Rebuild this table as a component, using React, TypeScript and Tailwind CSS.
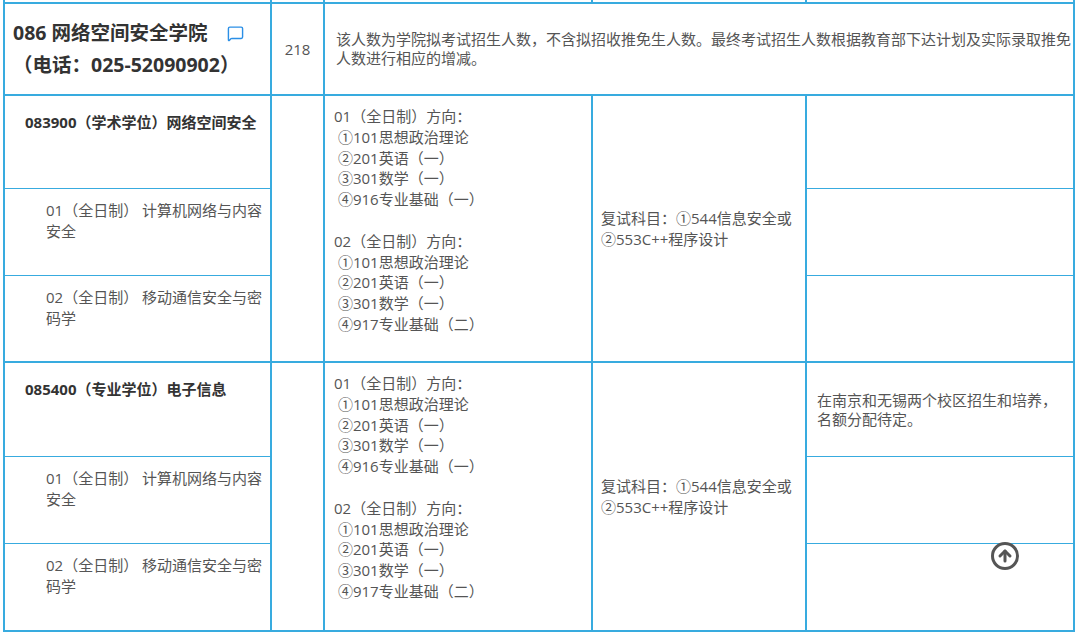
import React from 'react';
import { MessageSquare, CircleArrowUp } from 'lucide-react';

const font = { fontFamily: '"Open Sans", "Noto Sans CJK SC", sans-serif' };

const line = 'border-[#38abdf]';

const directions = [
  {
    label: '01（全日制）方向：',
    items: [' ①101思想政治理论', ' ②201英语（一）', ' ③301数学（一）', ' ④916专业基础（一）'],
  },
  {
    label: '02（全日制）方向：',
    items: [' ①101思想政治理论', ' ②201英语（一）', ' ③301数学（一）', ' ④917专业基础（二）'],
  },
];

const subs = [
  ['01（全日制） 计算机网络与内容', '安全'],
  ['02（全日制） 移动通信安全与密', '码学'],
];

function Exams() {
  return (
    <div className="pl-[9px] pt-[10px] text-[15px] leading-[20.8px] text-[#555] whitespace-pre">
      {directions.map((d, i) => (
        <div key={d.label} className={i > 0 ? 'mt-[20.8px]' : ''}>
          <div>{d.label}</div>
          {d.items.map((t) => (
            <div key={t}>{t}</div>
          ))}
        </div>
      ))}
    </div>
  );
}

function Retest() {
  return (
    <div className="h-full flex flex-col justify-center pl-[8px] text-[15px] leading-[21px] text-[#555]">
      <div>复试科目：①544信息安全或</div>
      <div>②553C++程序设计</div>
    </div>
  );
}

// one major block: 3 rows in col 1 and col 5, merged cells in col 2-4
function Section({ start, title, note }: { start: 'a' | 'b'; title: string; note?: string[] }) {
  const r = start === 'a'
    ? { r1: 'row-start-3', r2: 'row-start-4', r3: 'row-start-5', span: 'row-start-3 row-span-3' }
    : { r1: 'row-start-6', r2: 'row-start-7', r3: 'row-start-8', span: 'row-start-6 row-span-3' };

  return (
    <>
      <div className={`col-start-1 ${r.r1} border-r-2 border-b ${line} pl-[20px] pt-[16px]`}>
        <div className="text-[15px] leading-[21px] font-bold text-[#333]">{title}</div>
      </div>
      {subs.map((s, i) => (
        <div
          key={s[0]}
          className={`col-start-1 ${i === 0 ? r.r2 : r.r3} border-r-2 ${i === 0 ? 'border-b' : 'border-b-2'} ${line} pl-[41px] pt-[11px] text-[15px] leading-[21px] text-[#555] whitespace-pre`}
        >
          <div>{s[0]}</div>
          <div>{s[1]}</div>
        </div>
      ))}
      <div className={`col-start-2 ${r.span} border-r-2 border-b-2 ${line}`} />
      <div className={`col-start-3 ${r.span} border-r-2 border-b-2 ${line}`}>
        <Exams />
      </div>
      <div className={`col-start-4 ${r.span} border-r-2 border-b-2 ${line}`}>
        <Retest />
      </div>
      <div className={`col-start-5 ${r.r1} border-r-2 border-b ${line} flex flex-col justify-center pl-[10px] text-[15px] leading-[19px] text-[#555]`}>
        {note?.map((t) => <div key={t}>{t}</div>)}
      </div>
      <div className={`col-start-5 ${r.r2} border-r-2 border-b ${line}`} />
      <div className={`col-start-5 ${r.r3} border-r-2 border-b-2 ${line}`} />
    </>
  );
}

export default function App() {
  return (
    <div className="relative w-[1080px] h-[635px] bg-white overflow-hidden" style={font}>
      <div
        className={`ml-[3px] grid grid-cols-[267px_53px_268px_214px_268px] grid-rows-[4px_92px_93px_87px_87px_94px_87px_88px] border-l-2 ${line}`}
      >
        {/* strip of the previous row */}
        <div className={`col-start-1 row-start-1 border-r-2 border-b-2 ${line}`} />
        <div className={`col-start-2 row-start-1 border-r-2 border-b-2 ${line}`} />
        <div className={`col-start-3 row-start-1 border-r-2 border-b-2 ${line}`} />
        <div className={`col-start-4 row-start-1 border-r-2 border-b-2 ${line}`} />
        <div className={`col-start-5 row-start-1 border-r-2 border-b-2 ${line}`} />

        {/* college row */}
        <div className={`col-start-1 row-start-2 border-r-2 border-b-2 ${line} flex flex-col justify-center pl-[8px] text-[19.5px] leading-[32px] font-bold text-[#333]`}>
          <div className="flex items-center">
            <span>086 网络空间安全学院</span>
            <MessageSquare size={17} strokeWidth={2} className="ml-[19px] text-[#2b8fe6]" />
          </div>
          <div>（电话：025-52090902）</div>
        </div>
        <div className={`col-start-2 row-start-2 border-r-2 border-b-2 ${line} flex items-center justify-center text-[15px] text-[#555]`}>
          218
        </div>
        <div className={`col-start-3 col-span-3 row-start-2 border-r-2 border-b-2 ${line} flex flex-col justify-center pl-[11px] text-[15px] leading-[19px] text-[#555]`}>
          <div>该人数为学院拟考试招生人数，不含拟招收推免生人数。最终考试招生人数根据教育部下达计划及实际录取推免</div>
          <div>人数进行相应的增减。</div>
        </div>

        <Section start="a" title="083900（学术学位）网络空间安全" />
        <Section
          start="b"
          title="085400（专业学位）电子信息"
          note={['在南京和无锡两个校区招生和培养，', '名额分配待定。']}
        />
      </div>

      {/* back to top */}
      <div className="absolute left-[990px] top-[541px] text-[#555]">
        <CircleArrowUp size={30} strokeWidth={2.4} />
      </div>
    </div>
  );
}
